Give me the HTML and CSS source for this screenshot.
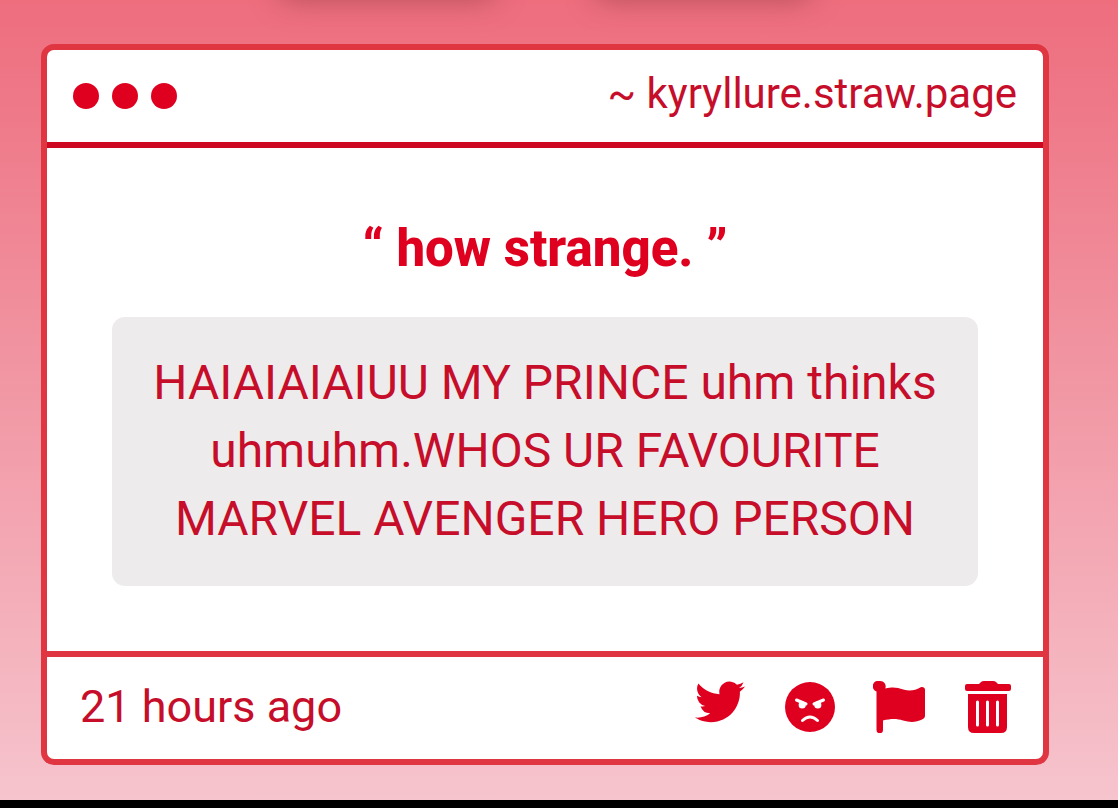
FILE: index.html
```
<!DOCTYPE html>
<html lang="en">
<head>
    <meta charset="UTF-8">
    <meta name="viewport" content="width=device-width, initial-scale=1.0">
    <title>how strange.</title>
    <link rel="stylesheet" href="styles.css">
</head>
<body>
    <main class="page">
        <div class="tabs">
            <div class="tab"></div>
            <div class="tab"></div>
        </div>
        <article class="card">
            <header class="card-header">
                <div class="dots">
                    <span class="dot"></span>
                    <span class="dot"></span>
                    <span class="dot"></span>
                </div>
                <a href="#" class="site">~ kyryllure.straw.page</a>
            </header>
            <section class="card-body">
                <h1 class="title">“ how strange. ”</h1>
                <p class="message">HAIAIAIAIUU MY PRINCE uhm thinks uhmuhm.WHOS UR FAVOURITE MARVEL AVENGER HERO PERSON</p>
            </section>
            <footer class="card-footer">
                <span class="time">21 hours ago</span>
                <div class="actions">
                    <button type="button" class="action action-share" aria-label="Share on Twitter">
                        <svg viewBox="0 2.300 24 20"><path d="M23.953 4.57a10 10 0 01-2.825.775 4.958 4.958 0 002.163-2.723c-.951.555-2.005.959-3.127 1.184a4.92 4.92 0 00-8.384 4.482C7.69 8.095 4.067 6.13 1.64 3.162a4.822 4.822 0 00-.666 2.475c0 1.71.87 3.213 2.188 4.096a4.904 4.904 0 01-2.228-.616v.06a4.923 4.923 0 003.946 4.827 4.996 4.996 0 01-2.212.085 4.936 4.936 0 004.604 3.417 9.867 9.867 0 01-6.102 2.105c-.39 0-.779-.023-1.17-.067a13.995 13.995 0 007.557 2.209c9.053 0 13.998-7.496 13.998-13.985 0-.21 0-.42-.015-.63A9.935 9.935 0 0024 4.59z"/></svg>
                    </button>
                    <button type="button" class="action" aria-label="Block">
                        <svg viewBox="0 0 52 52">
                            <circle cx="26" cy="26" r="25"/>
                            <g class="face">
                                <path d="M12.500 19l9.500 4M39.500 19l-9.500 4M18.500 39.500q7.500-7 15 0"/>
                                <circle class="eye" cx="18.200" cy="24" r="3.600"/>
                                <circle class="eye" cx="33.800" cy="24" r="3.600"/>
                            </g>
                        </svg>
                    </button>
                    <button type="button" class="action" aria-label="Report">
                        <svg viewBox="0 0 52 52"><path d="M7 0a5.500 5.500 0 0 1 5.300 7.500c8-2 12-1 18 1 6 2 12 1 17-2 2-1 4.700 0 4.700 2v26c0 2-1 3-3 4-6 3-12 3-19 1-6-2-12-2-20 0v9.500a3 3 0 0 1-6.500 0V10.500A5.500 5.500 0 0 1 7 0z"/></svg>
                    </button>
                    <button type="button" class="action" aria-label="Delete">
                        <svg viewBox="0 0 52 52">
                            <path d="M5 3h12l2-2q1-1 3-1h9q2 0 3 1l2 2h11q2 0 2 2v3q0 2-2 2H5q-2 0-2-2V5q0-2 2-2z"/>
                            <path d="M6 13h39v33q0 6-6 6H12q-6 0-6-6z"/>
                            <path class="bars" d="M15.500 21v23M25.500 21v23M35.500 21v23"/>
                        </svg>
                    </button>
                </div>
            </footer>
        </article>
    </main>
</body>
</html>
```
FILE: styles.css
```
* {
    box-sizing: border-box;
}
body {
    margin: 0;
    min-height: 100vh;
    background-color: #000;
    color: #c60e2a;
    font-family: Roboto, sans-serif;
}
.page {
    padding: 0 69px 35px 41px;
    background: linear-gradient(#ee6e7e, #ee7484 8%, #f6c4cd);
    overflow: hidden;
}
.tabs {
    display: flex;
    justify-content: center;
    gap: 100px;
    height: 44px;
}
.tab {
    width: 216px;
    height: 60px;
    margin-top: -64px;
    border-radius: 12px;
    box-shadow: 0 4px 28px rgba(130, 50, 60, 0.5);
}
.card {
    background-color: #fff;
    border: 6px solid #df3642;
    border-radius: 13px;
}
.card-header {
    display: flex;
    align-items: center;
    justify-content: space-between;
    height: 98px;
    padding: 0 26px;
    border-bottom: 6px solid #cf0822;
}
.dots {
    display: flex;
    gap: 13px;
}
.dot {
    width: 26px;
    height: 26px;
    border-radius: 50%;
    background-color: #df0020;
}
.site {
    color: inherit;
    font-size: 42px;
    line-height: 52px;
    text-decoration: none;
    padding-bottom: 4px;
}
.card-body {
    padding: 65px;
    text-align: center;
}
.title {
    margin: 0 0 32px;
    color: #df0020;
    font-size: 51px;
    font-weight: 800;
    line-height: 72px;
}
.message {
    margin: 0;
    padding: 32px 40px 33px;
    border-radius: 13px;
    background-color: #eeebec;
    font-size: 48px;
    line-height: 68px;
}
.card-footer {
    display: flex;
    align-items: center;
    justify-content: space-between;
    height: 108px;
    padding: 0 29px 2px 33px;
    border-top: 6px solid #df3642;
}
.time {
    font-size: 45px;
    line-height: 52px;
}
.actions {
    display: flex;
    gap: 37px;
}
.action {
    display: flex;
    width: 52px;
    height: 52px;
    padding: 0;
    border: 0;
    background: none;
    color: #df0020;
    cursor: pointer;
}
.action svg {
    width: 100%;
    height: 100%;
    fill: currentColor;
}
.action-share {
    padding: 0 2px 9px 0;
}
.face {
    fill: none;
    stroke: #fff;
    stroke-width: 3;
    stroke-linecap: round;
}
.eye {
    fill: #fff;
    stroke: none;
}
.bars {
    stroke: #fff;
    stroke-width: 3;
    stroke-linecap: round;
}
```
